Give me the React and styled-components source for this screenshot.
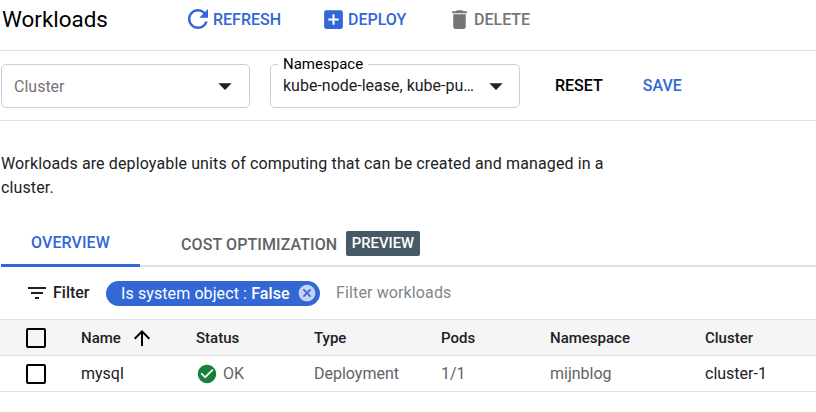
import React from "react";
import styled, { createGlobalStyle } from "styled-components";
import {
  MdRefresh,
  MdAddBox,
  MdDelete,
  MdArrowDropDown,
  MdFilterList,
  MdCancel,
  MdArrowUpward,
  MdCheckCircle,
} from "react-icons/md";

const GlobalStyle = createGlobalStyle`
  html, body {
    margin: 0;
    padding: 0;
    background: #fff;
    font-family: Roboto, "Liberation Sans", sans-serif;
    overflow: hidden;
  }
`;

const Page = styled.div`
  width: 816px;
  height: 412px;
  overflow: hidden;
  color: #202124;
`;
const Header = styled.div`
  height: 50px;
  display: flex;
  align-items: center;
  padding: 0 0 12px 2px;
  box-sizing: border-box;
`;
const Title = styled.h1`
  margin: 0;
  width: 181px;
  font-size: 22.4px;
  line-height: 28px;
  font-weight: 400;
  color: #000;
`;
const Action = styled.div`
  display: flex;
  align-items: center;
  width: ${(props) => props.$width}px;
  flex: none;
  gap: ${(props) => props.$gap}px;
  font-size: 16px;
  font-weight: 500;
  color: ${(props) => (props.$muted ? "#757575" : "#3367d6")};
`;
const FilterBar = styled.div`
  height: 71px;
  box-sizing: border-box;
  border-top: 1px solid #e0e0e0;
  border-bottom: 1px solid #e0e0e0;
  display: flex;
  align-items: center;
  padding: 1px 0 0 1px;
`;
const Field = styled.div`
  position: relative;
  width: ${(props) => props.$width}px;
  height: 44px;
  flex: none;
  box-sizing: border-box;
  border: 1px solid #cfcfcf;
  border-radius: 5px;
  margin-right: ${(props) => props.$gap}px;
  display: flex;
  align-items: center;
  justify-content: space-between;
  padding: 0 ${(props) => props.$arrowPad}px 0 12px;
  font-size: 16px;
  color: ${(props) => (props.$placeholder ? "#757575" : "#202124")};
`;
const FieldLabel = styled.span`
  position: absolute;
  top: -10px;
  left: 7px;
  padding: 0 5px;
  background: #fff;
  font-size: 15px;
  line-height: 18px;
  color: #000;
`;
const FieldValue = styled.span`
  white-space: nowrap;
  margin-top: ${(props) => props.$offset}px;
`;
const TextButton = styled.div`
  font-size: 16px;
  font-weight: 500;
  margin-right: ${(props) => props.$gap}px;
  margin-bottom: 2px;
  color: ${(props) => (props.$primary ? "#3367d6" : "#000")};
`;
const Description = styled.p`
  margin: 0;
  padding: 31px 0 0 1px;
  width: 620px;
  height: 100px;
  box-sizing: border-box;
  font-size: 16px;
  line-height: 24px;
  letter-spacing: 0.13px;
  color: #202124;
`;
const Tabs = styled.div`
  height: 46px;
  box-sizing: border-box;
  border-bottom: 2px solid #e0e0e0;
  display: flex;
  margin-left: 1px;
`;
const Tab = styled.div`
  width: ${(props) => props.$width}px;
  height: 46px;
  box-sizing: border-box;
  display: flex;
  align-items: center;
  padding: 0 0 0 ${(props) => props.$pad}px;
  gap: 9px;
  font-size: 16px;
  font-weight: 500;
  letter-spacing: 0.1px;
  white-space: nowrap;
  color: ${(props) => (props.$active ? "#3367d6" : "#5f6368")};
  border-bottom: ${(props) => (props.$active ? "3px solid #3367d6" : "0")};
`;
const Badge = styled.span`
  background: #455a64;
  color: #fff;
  border-radius: 2px;
  padding: 0 5.5px;
  margin-bottom: 2px;
  font-size: 14.8px;
  line-height: 25px;
  letter-spacing: 0;
`;
const FilterRow = styled.div`
  height: 52px;
  display: flex;
  align-items: center;
  padding-left: 25px;
  box-sizing: border-box;
`;
const FilterLabel = styled.div`
  display: flex;
  align-items: center;
  gap: 4px;
  width: 81px;
  margin-bottom: 1px;
  font-size: 16px;
  font-weight: 500;
  color: #202124;
`;
const Chip = styled.div`
  height: 25px;
  box-sizing: border-box;
  width: 214px;
  border-radius: 13px;
  background: #3367d6;
  color: #fff;
  display: flex;
  align-items: center;
  justify-content: space-between;
  padding: 0 3px 0 15px;
  font-size: 16px;
  letter-spacing: 0.1px;
  white-space: nowrap;
  b {
    font-weight: 500;
  }
  svg {
    color: #c6d4f3;
  }
`;
const FilterInput = styled.div`
  margin-left: 16px;
  margin-bottom: 2px;
  font-size: 16px;
  letter-spacing: 0.13px;
  color: #80868b;
`;
const Row = styled.div`
  display: grid;
  grid-template-columns: 81px 115px 118px 127px 109px 155px 1fr;
  align-items: center;
  height: ${(props) => (props.$last ? 37 : 36)}px;
  box-sizing: border-box;
  border-top: 1px solid #e0e0e0;
  border-bottom: ${(props) => (props.$last ? "1px solid #e0e0e0" : "0")};
  background: ${(props) => (props.$head ? "#f5f5f5" : "#fff")};
  font-size: ${(props) => (props.$head ? 15 : 16)}px;
  font-weight: ${(props) => (props.$head ? 500 : 400)};
  color: ${(props) => (props.$head ? "#202124" : "#5f6368")};
`;
const CheckCell = styled.div`
  padding-left: 26px;
`;
const Checkbox = styled.div`
  width: 20px;
  height: 20px;
  box-sizing: border-box;
  border: 2px solid #000;
  border-radius: 2px;
`;
const Cell = styled.div`
  display: flex;
  align-items: center;
  gap: ${(props) => props.$gap || 0}px;
  color: ${(props) => (props.$dark ? "#202124" : "inherit")};
  white-space: nowrap;
`;

const App = () => {
  return (
    <Page>
      <GlobalStyle />
      <Header>
        <Title>Workloads</Title>
        <Action $width={138} $gap={0}>
          <MdRefresh size={30} />
          REFRESH
        </Action>
        <Action $width={126} $gap={2}>
          <MdAddBox size={25} />
          DEPLOY
        </Action>
        <Action $muted $width={100} $gap={2}>
          <MdDelete size={25} />
          DELETE
        </Action>
      </Header>
      <FilterBar>
        <Field $placeholder $width={249} $gap={20} $arrowPad={8}>
          <FieldValue $offset={1}>Cluster</FieldValue>
          <MdArrowDropDown size={32} color="#202124" />
        </Field>
        <Field $width={250} $gap={35} $arrowPad={7}>
          <FieldLabel>Namespace</FieldLabel>
          <FieldValue $offset={-2}>kube-node-lease, kube-pu…</FieldValue>
          <MdArrowDropDown size={32} color="#202124" />
        </Field>
        <TextButton $gap={40}>RESET</TextButton>
        <TextButton $primary>SAVE</TextButton>
      </FilterBar>
      <Description>
        Workloads are deployable units of computing that can be created and
        managed in a cluster.
      </Description>
      <Tabs>
        <Tab $active $width={139} $pad={30}>
          OVERVIEW
        </Tab>
        <Tab $pad={41}>
          COST OPTIMIZATION
          <Badge>PREVIEW</Badge>
        </Tab>
      </Tabs>
      <FilterRow>
        <FilterLabel>
          <MdFilterList size={24} />
          Filter
        </FilterLabel>
        <Chip>
          <span>
            Is system object : <b>False</b>
          </span>
          <MdCancel size={20} />
        </Chip>
        <FilterInput>Filter workloads</FilterInput>
      </FilterRow>
      <Row $head>
        <CheckCell>
          <Checkbox />
        </CheckCell>
        <Cell $gap={9}>
          Name
          <MdArrowUpward size={24} color="#000" />
        </Cell>
        <Cell>Status</Cell>
        <Cell>Type</Cell>
        <Cell>Pods</Cell>
        <Cell>Namespace</Cell>
        <Cell>Cluster</Cell>
      </Row>
      <Row $last>
        <CheckCell>
          <Checkbox />
        </CheckCell>
        <Cell $dark>mysql</Cell>
        <Cell $gap={5}>
          <MdCheckCircle size={22} color="#188038" />
          OK
        </Cell>
        <Cell>Deployment</Cell>
        <Cell>1/1</Cell>
        <Cell>mijnblog</Cell>
        <Cell $dark>cluster-1</Cell>
      </Row>
    </Page>
  );
};

export default App;
